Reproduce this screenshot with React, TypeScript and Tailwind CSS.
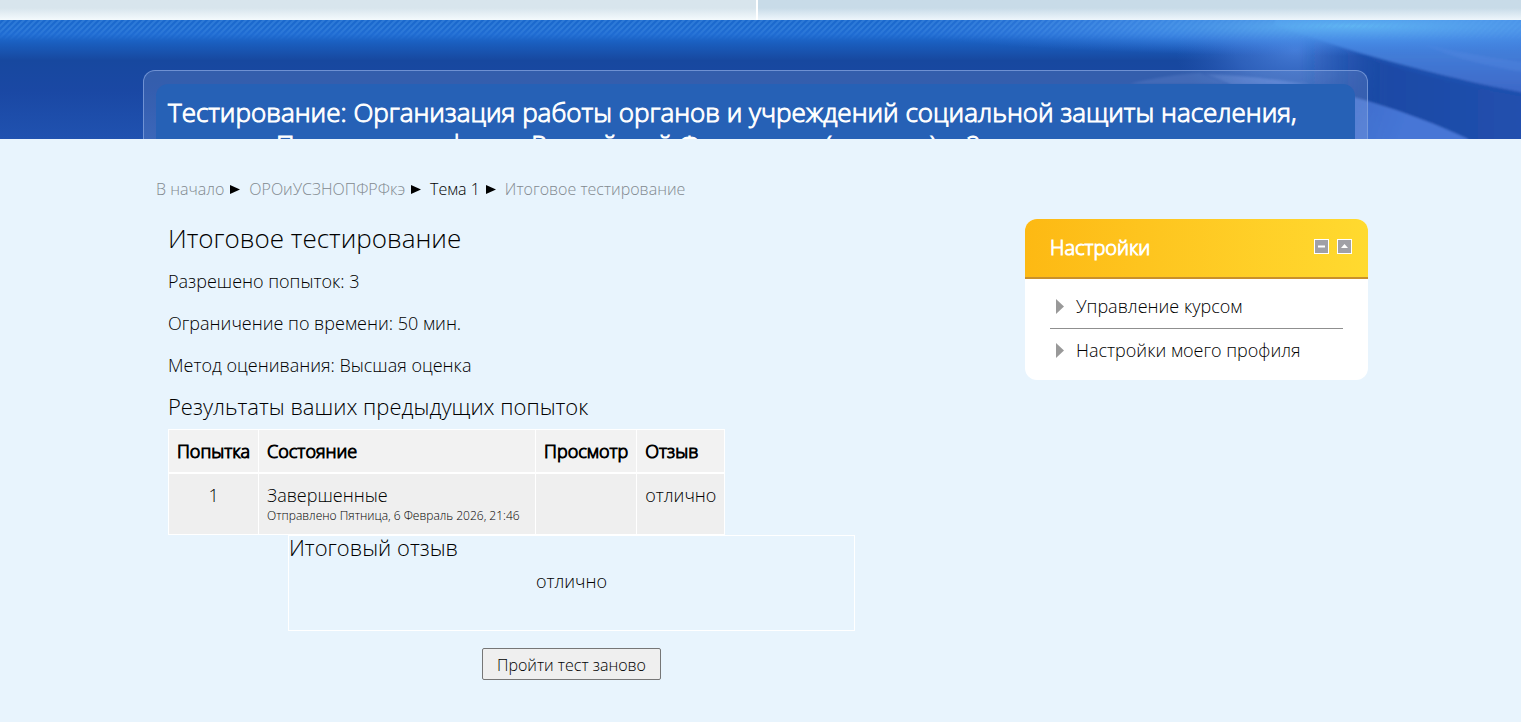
// FILE: src/pages/QuizPage.tsx

type Crumb = { label: string; current?: boolean };

const CRUMBS: Crumb[] = [
  { label: 'В начало' },
  { label: 'ОРОиУСЗНОПФРФкэ' },
  { label: 'Тема 1', current: true },
  { label: 'Итоговое тестирование' },
];

const INFO = [
  'Разрешено попыток: 3',
  'Ограничение по времени: 50 мин.',
  'Метод оценивания: Высшая оценка',
];

const SETTINGS = ['Управление курсом', 'Настройки моего профиля'];

const TopBar = () => (
  <div className="flex h-5 gap-[2px] bg-white">
    <div className="w-[756px] bg-linear-to-b from-[#d8e5ed] from-40% to-[#f4fafd]" />
    <div className="flex-1 bg-linear-to-b from-[#c8dbe8] from-40% to-[#eef6fc]" />
  </div>
);

const HeaderBackground = () => (
  <svg
    className="absolute inset-0 h-full w-full"
    viewBox="0 0 1521 119"
    preserveAspectRatio="none"
    aria-hidden="true"
  >
    <defs>
      <linearGradient id="base" x1="0" y1="0" x2="0" y2="1">
        <stop offset="0" stopColor="#1a68cc" />
        <stop offset="0.12" stopColor="#1f6cd3" />
        <stop offset="0.2" stopColor="#1a5dbd" />
        <stop offset="0.34" stopColor="#17489f" />
        <stop offset="0.6" stopColor="#1a48a4" />
        <stop offset="1" stopColor="#2052b0" />
      </linearGradient>
      <radialGradient id="sky">
        <stop offset="0" stopColor="#61b8f4" stopOpacity="0.95" />
        <stop offset="0.5" stopColor="#4b93ec" stopOpacity="0.6" />
        <stop offset="1" stopColor="#3d7ce0" stopOpacity="0" />
      </radialGradient>
      <radialGradient id="beam">
        <stop offset="0" stopColor="#4a80da" stopOpacity="0.9" />
        <stop offset="0.5" stopColor="#3c70cc" stopOpacity="0.6" />
        <stop offset="1" stopColor="#2a5cba" stopOpacity="0" />
      </radialGradient>
      <linearGradient id="ray" x1="0" y1="0" x2="0" y2="1">
        <stop offset="0" stopColor="#4590e6" />
        <stop offset="0.5" stopColor="#437dd8" />
        <stop offset="1" stopColor="#3d66c6" />
      </linearGradient>
      <linearGradient id="low" gradientUnits="userSpaceOnUse" x1="1200" y1="50" x2="1400" y2="119">
        <stop offset="0" stopColor="#6a8fe0" stopOpacity="0" />
        <stop offset="0.5" stopColor="#4a78d6" stopOpacity="0.6" />
        <stop offset="1" stopColor="#4676d6" />
      </linearGradient>
      <linearGradient id="dark" gradientUnits="userSpaceOnUse" x1="1300" y1="0" x2="1521" y2="0">
        <stop offset="0" stopColor="#1b4aa6" stopOpacity="0" />
        <stop offset="0.4" stopColor="#1b4aa6" />
        <stop offset="1" stopColor="#2250ae" />
      </linearGradient>
      <linearGradient id="edge" gradientUnits="userSpaceOnUse" x1="1300" y1="0" x2="1400" y2="0">
        <stop offset="0" stopColor="#1b4fae" stopOpacity="0.2" />
        <stop offset="1" stopColor="#1b4fae" />
      </linearGradient>
      <filter id="soft" x="-5%" y="-10%" width="110%" height="120%">
        <feGaussianBlur stdDeviation="1" />
      </filter>
      <pattern id="hatch" width="6" height="6" patternUnits="userSpaceOnUse">
        <path d="M-1 7 7 -1M-1 1 1 -1M5 7 7 5" stroke="#5aa4f0" strokeOpacity="0.3" strokeWidth="2" />
      </pattern>
      <linearGradient id="fade" x1="0" y1="0" x2="0" y2="1">
        <stop offset="0.4" stopColor="#fff" />
        <stop offset="1" stopColor="#fff" stopOpacity="0" />
      </linearGradient>
      <mask id="hatchMask">
        <rect width="1521" height="21" fill="url(#fade)" />
      </mask>
    </defs>
    <rect width="1521" height="119" fill="url(#base)" />
    <ellipse cx="1295" cy="30" rx="120" ry="66" fill="url(#beam)" />
    <g filter="url(#soft)">
      <path d="M1290 12C1370 40 1450 62 1540 79V130H1490C1450 108 1400 88 1300 65Z" fill="url(#dark)" />
      <path d="M1275 5C1350 32 1450 60 1540 76V-10H1275Z" fill="url(#ray)" />
      <path d="M1300 13C1370 38 1450 60 1540 76V80C1450 64 1370 43 1300 13Z" fill="url(#edge)" />
      <path d="M1425 25C1460 40 1490 47 1540 55V45C1490 38 1460 32 1425 25Z" fill="#5a8ee6" opacity="0.25" />
      <path d="M1200 53C1290 56 1390 82 1468 119V130H1300L1230 64Z" fill="url(#low)" />
      <path d="M1130 64C1150 58 1180 54 1200 53L1228 64Z" fill="#6a92dc" opacity="0.2" />
      <path d="M1205 54 1230 64H1310C1275 58 1240 56 1205 54Z" fill="#7b9fe4" opacity="0.2" />
    </g>
    <ellipse cx="1350" cy="6" rx="460" ry="30" fill="url(#sky)" />
    <rect width="1521" height="21" fill="url(#hatch)" mask="url(#hatchMask)" />
  </svg>
);

const Header = () => (
  <header className="relative h-[119px] overflow-hidden pt-[50px] pr-[153px] pl-[143px]">
    <HeaderBackground />
    <div className="relative rounded-t-xl border border-b-0 border-[#7f9fdc]/80 bg-white/12 px-3 pt-[13px]">
      <h1 className="rounded-t-xl bg-[#2661b6] px-3 pt-3 text-[26px] leading-8 font-light text-white [-webkit-text-stroke:1px]">
        Тестирование: Организация работы органов и учреждений социальной защиты населения, органов
        Пенсионного фонда Российской Федерации (экзамен) и 2
      </h1>
    </div>
  </header>
);

const Breadcrumbs = () => (
  <nav aria-label="Навигация" className="pl-[13px] text-base leading-6">
    <ul className="flex items-center gap-2">
      {CRUMBS.map((crumb, i) => (
        <li key={crumb.label} className="flex items-center gap-1.5">
          {crumb.current ? (
            <span>{crumb.label}</span>
          ) : (
            <a href="#" className="text-[#82898f]">
              {crumb.label}
            </a>
          )}
          {i < CRUMBS.length - 1 && (
            <svg className="h-[9px] w-[11px]" viewBox="0 0 11 9" aria-hidden="true">
              <path d="M0 0 10 4.5 0 9Z" fill="#000" />
            </svg>
          )}
        </li>
      ))}
    </ul>
  </nav>
);

const AttemptsTable = () => (
  <table className="border-collapse text-left">
    <thead className="bg-[#f2f2f2] [-webkit-text-stroke:1px]">
      <tr className="h-[43px] border-b-2 border-white">
        <th className="border-x border-t border-white px-2 font-light">Попытка</th>
        <th className="w-[277px] border-x border-t border-white px-2 font-light">Состояние</th>
        <th className="border-x border-t border-white px-2 font-light">Просмотр</th>
        <th className="border-x border-t border-white px-2 font-light">Отзыв</th>
      </tr>
    </thead>
    <tbody className="bg-[#efefef]">
      <tr className="align-top">
        <td className="border border-white px-2 pt-2 pb-2.5 text-center">1</td>
        <td className="border border-white px-2 pt-2 pb-2.5">
          Завершенные
          <span className="block text-xs">Отправлено Пятница, 6 Февраль 2026, 21:46</span>
        </td>
        <td className="border border-white px-2 pt-2 pb-2.5" />
        <td className="border border-white px-2 pt-2 pb-2.5">отлично</td>
      </tr>
    </tbody>
  </table>
);

const SettingsBlock = () => (
  <aside className="w-[343px] shrink-0 self-start overflow-hidden rounded-xl bg-white">
    <div className="flex h-[60px] items-center justify-between border-b-2 border-[#c9902b] bg-linear-to-r from-[#fdb913] to-[#ffda2f] pr-4 pl-[25px]">
      <h2 className="text-xl font-light text-white [-webkit-text-stroke:1px]">Настройки</h2>
      <div className="flex gap-2 pb-1">
        <button type="button" aria-label="Скрыть блок">
          <svg className="block h-[15px] w-[15px]" viewBox="0 0 15 15">
            <rect x="0.5" y="0.5" width="14" height="14" fill="#a0a0a6" stroke="#fff" />
            <path d="M4 7.5h7" stroke="#fff" strokeWidth="2" />
          </svg>
        </button>
        <button type="button" aria-label="Переместить в док">
          <svg className="block h-[15px] w-[15px]" viewBox="0 0 15 15">
            <rect x="0.5" y="0.5" width="14" height="14" fill="#a0a0a6" stroke="#fff" />
            <path d="M4 9 7.5 5 11 9Z" fill="#fff" />
          </svg>
        </button>
      </div>
    </div>
    <ul className="px-[25px] pt-1.5 pb-2">
      {SETTINGS.map((item) => (
        <li key={item} className="border-b border-[#8f8f8f] last:border-b-0">
          <button type="button" className="flex h-[43px] items-center gap-3 pb-px pl-1.5">
            <svg className="h-[15px] w-2" viewBox="0 0 8 15" aria-hidden="true">
              <path d="M0 0 8 7.5 0 15Z" fill="#999" />
            </svg>
            {item}
          </button>
        </li>
      ))}
    </ul>
  </aside>
);

const App = () => (
  <div className="min-h-screen bg-[#e8f4fd] font-['Open_Sans','Noto_Sans',sans-serif] text-lg leading-[26px] font-light text-black">
    <TopBar />
    <Header />
    <div className="pt-[38px] pr-[153px] pb-10 pl-[143px]">
      <Breadcrumbs />
      <div className="mt-[18px] flex items-start gap-[50px]">
        <main className="min-w-0 flex-1 pl-[25px]">
          <h2 className="text-[26px] leading-[38px]">Итоговое тестирование</h2>
          <div className="mt-[11px] flex flex-col gap-4">
            {INFO.map((line) => (
              <p key={line}>{line}</p>
            ))}
          </div>
          <h3 className="mt-3 text-[22px] leading-8">Результаты ваших предыдущих попыток</h3>
          <div className="mt-[7px]">
            <AttemptsTable />
          </div>
          <section className="mx-auto h-24 w-[567px] border border-white">
            <h3 className="text-[22px] leading-[22px]">Итоговый отзыв</h3>
            <p className="mt-2.5 text-center">отлично</p>
          </section>
          <div className="mt-[17px] text-center">
            <button
              type="button"
              className="h-8 rounded-xs border border-[#767676] bg-[#efefef] px-3.5 text-base leading-8"
            >
              Пройти тест заново
            </button>
          </div>
        </main>
        <SettingsBlock />
      </div>
    </div>
  </div>
);

export default App;
